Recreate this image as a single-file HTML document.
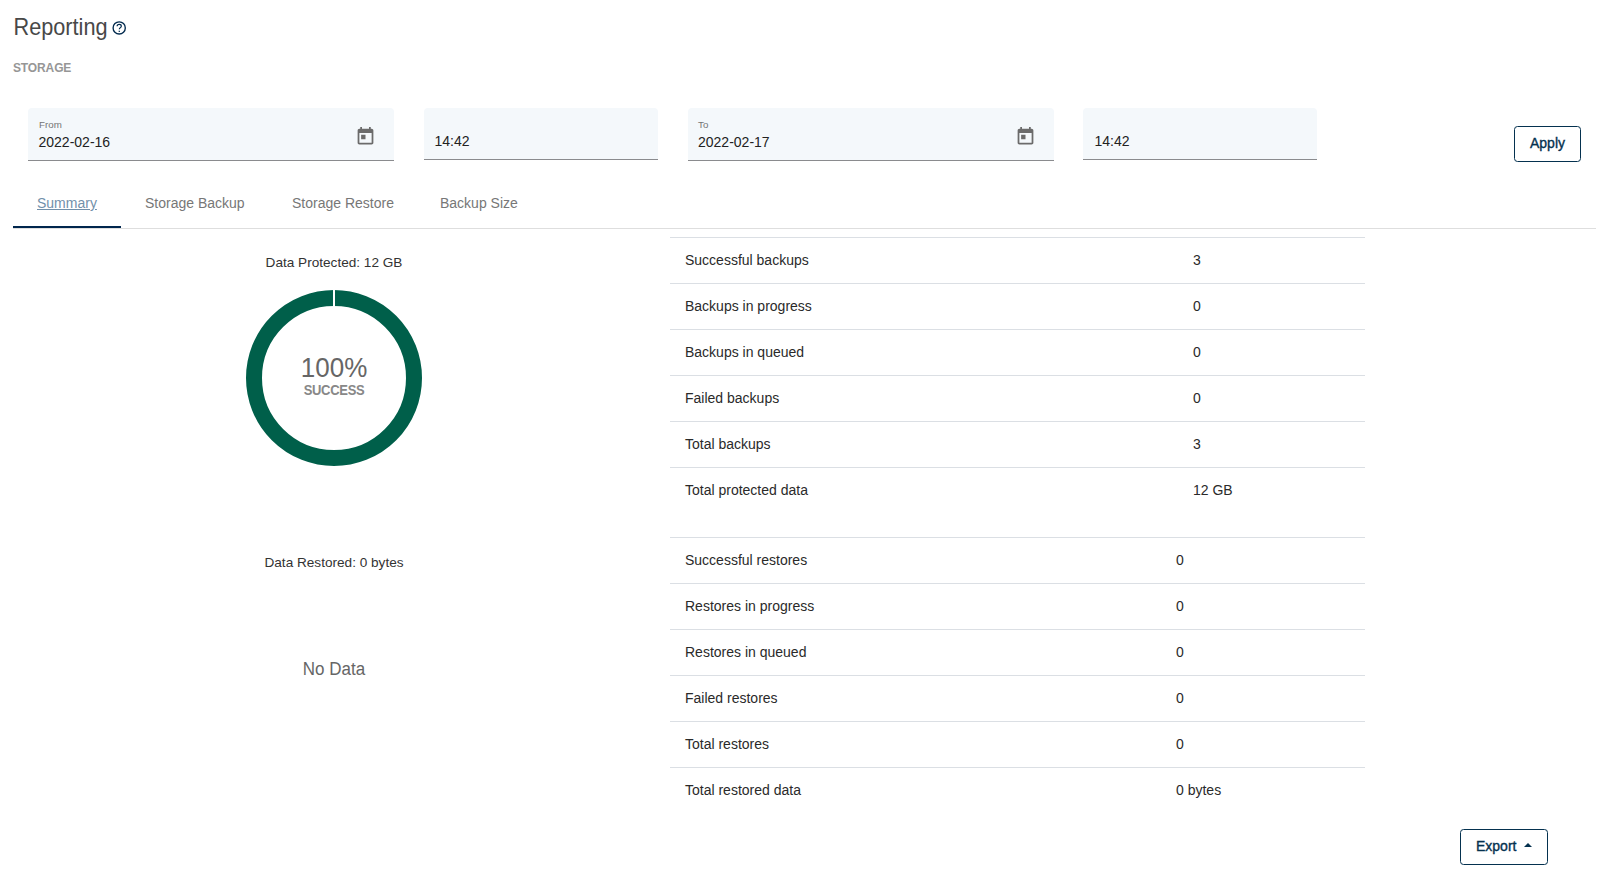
<!DOCTYPE html>
<html>
<head>
<meta charset="utf-8">
<style>
html,body{margin:0;padding:0;background:#fff;width:1610px;height:875px;overflow:hidden;}
body{position:relative;font-family:"Liberation Sans",sans-serif;color:#333;}
.a{position:absolute;white-space:nowrap;}
.t{position:absolute;white-space:nowrap;line-height:1;}
.box{position:absolute;background:#f4f8fb;border-radius:4px 4px 0 0;box-sizing:border-box;border-bottom:1px solid #8a8b8e;}
.lbl{font-size:9.75px;color:#757575;}
.val{font-size:14px;color:#222;}
.tab{font-size:14px;color:#777;}
.hl{position:absolute;height:1px;background:#dbdfe4;}
.row{font-size:14px;color:#2a2a2a;}
.btn{position:absolute;box-sizing:border-box;border:1.5px solid #04314f;border-radius:3.5px;background:#fff;}
</style>
</head>
<body>
<!-- Title -->
<div class="t" style="left:13.5px;top:16.6px;font-size:21.7px;color:#484848;transform:scaleY(1.065);transform-origin:0 18.37px;">Reporting</div>
<svg class="a" style="left:111px;top:20px" width="16" height="16" viewBox="0 0 16 16"><circle cx="8.2" cy="7.9" r="6.1" fill="none" stroke="#022a4e" stroke-width="1.35"/><path d="M6.1 6.3C6.1 5.1 7 4.4 8.2 4.4S10.3 5.1 10.3 6.2C10.3 7.6 8.3 7.7 8.3 9.3" fill="none" stroke="#022a4e" stroke-width="1.2"/><rect x="7.65" y="10.7" width="1.3" height="1.2" fill="#022a4e"/></svg>
<div class="t" style="left:13px;top:61.8px;font-size:12px;font-weight:bold;color:#969696;letter-spacing:-0.13px;">STORAGE</div>

<!-- Inputs -->
<div class="box" style="left:28px;top:108px;width:366px;height:53px;"></div>
<div class="t lbl" style="left:39px;top:119.8px;">From</div>
<div class="t val" style="left:38.5px;top:135.2px;">2022-02-16</div>
<svg class="a" style="left:355px;top:126px" width="21" height="21" viewBox="0 0 24 24"><path fill="#6b6b6b" d="M19 3h-1V1h-2v2H8V1H6v2H5c-1.11 0-1.99.9-1.99 2L3 19c0 1.1.89 2 2 2h14c1.1 0 2-.9 2-2V5c0-1.1-.9-2-2-2zm0 16H5V8h14v11zM7 10h5v5H7z"/></svg>

<div class="box" style="left:424px;top:108px;width:234px;height:52px;"></div>
<div class="t val" style="left:434.5px;top:133.9px;">14:42</div>

<div class="box" style="left:688px;top:108px;width:366px;height:53px;"></div>
<div class="t lbl" style="left:698px;top:119.8px;">To</div>
<div class="t val" style="left:698px;top:135.2px;">2022-02-17</div>
<svg class="a" style="left:1015px;top:126px" width="21" height="21" viewBox="0 0 24 24"><path fill="#6b6b6b" d="M19 3h-1V1h-2v2H8V1H6v2H5c-1.11 0-1.99.9-1.99 2L3 19c0 1.1.89 2 2 2h14c1.1 0 2-.9 2-2V5c0-1.1-.9-2-2-2zm0 16H5V8h14v11zM7 10h5v5H7z"/></svg>

<div class="box" style="left:1083px;top:108px;width:234px;height:52px;"></div>
<div class="t val" style="left:1094.5px;top:133.9px;">14:42</div>

<div class="btn" style="left:1514px;top:126px;width:67px;height:36px;"></div>
<div class="t" style="left:1530px;top:136.3px;font-size:14px;color:#04314f;-webkit-text-stroke:0.35px #04314f;">Apply</div>

<!-- Tabs -->
<div class="a" style="left:13px;top:228px;width:1583px;height:1px;background:#dedede;"></div>
<div class="a" style="left:13px;top:226px;width:108px;height:2px;background:#00264d;"></div>
<div class="t tab" style="left:37px;top:196px;color:#7290aa;text-decoration:underline;">Summary</div>
<div class="t tab" style="left:145px;top:196px;">Storage Backup</div>
<div class="t tab" style="left:292px;top:196px;">Storage Restore</div>
<div class="t tab" style="left:440px;top:196px;">Backup Size</div>

<!-- Charts -->
<div class="t" style="left:234px;width:200px;text-align:center;top:255.6px;font-size:13.6px;color:#333;">Data Protected: 12 GB</div>
<svg class="a" style="left:244px;top:288px" width="180" height="180" viewBox="0 0 180 180">
<circle cx="90" cy="90" r="80" fill="none" stroke="#005f4a" stroke-width="16"/>
<rect x="89" y="0" width="2" height="20" fill="#fff"/>
</svg>
<div class="t" style="left:234px;width:200px;text-align:center;top:354.8px;font-size:26px;color:#666;transform:scaleY(1.085);transform-origin:50% 22px;">100%</div>
<div class="t" style="left:234px;width:200px;text-align:center;top:384px;font-size:13px;font-weight:bold;color:#888;letter-spacing:-0.3px;transform:scaleY(1.11);transform-origin:50% 11px;">SUCCESS</div>

<div class="t" style="left:234px;width:200px;text-align:center;top:555.7px;font-size:13.6px;color:#333;">Data Restored: 0 bytes</div>
<div class="t" style="left:234px;width:200px;text-align:center;top:661.2px;font-size:17px;color:#666;transform:scaleY(1.05);transform-origin:50% 14.4px;">No Data</div>

<!-- Tables -->
<div id="tables"></div>
<div class="hl" style="left:670px;top:237px;width:695px;"></div>
<div class="hl" style="left:670px;top:283px;width:695px;"></div>
<div class="hl" style="left:670px;top:329px;width:695px;"></div>
<div class="hl" style="left:670px;top:375px;width:695px;"></div>
<div class="hl" style="left:670px;top:421px;width:695px;"></div>
<div class="hl" style="left:670px;top:467px;width:695px;"></div>
<div class="t row" style="left:685px;top:253px;">Successful backups</div><div class="t row" style="left:1193px;top:253px;">3</div>
<div class="t row" style="left:685px;top:299px;">Backups in progress</div><div class="t row" style="left:1193px;top:299px;">0</div>
<div class="t row" style="left:685px;top:345px;">Backups in queued</div><div class="t row" style="left:1193px;top:345px;">0</div>
<div class="t row" style="left:685px;top:391px;">Failed backups</div><div class="t row" style="left:1193px;top:391px;">0</div>
<div class="t row" style="left:685px;top:437px;">Total backups</div><div class="t row" style="left:1193px;top:437px;">3</div>
<div class="t row" style="left:685px;top:483px;">Total protected data</div><div class="t row" style="left:1193px;top:483px;">12 GB</div>

<div class="hl" style="left:670px;top:537px;width:695px;"></div>
<div class="hl" style="left:670px;top:583px;width:695px;"></div>
<div class="hl" style="left:670px;top:629px;width:695px;"></div>
<div class="hl" style="left:670px;top:675px;width:695px;"></div>
<div class="hl" style="left:670px;top:721px;width:695px;"></div>
<div class="hl" style="left:670px;top:767px;width:695px;"></div>
<div class="t row" style="left:685px;top:553px;">Successful restores</div><div class="t row" style="left:1176px;top:553px;">0</div>
<div class="t row" style="left:685px;top:599px;">Restores in progress</div><div class="t row" style="left:1176px;top:599px;">0</div>
<div class="t row" style="left:685px;top:645px;">Restores in queued</div><div class="t row" style="left:1176px;top:645px;">0</div>
<div class="t row" style="left:685px;top:691px;">Failed restores</div><div class="t row" style="left:1176px;top:691px;">0</div>
<div class="t row" style="left:685px;top:737px;">Total restores</div><div class="t row" style="left:1176px;top:737px;">0</div>
<div class="t row" style="left:685px;top:783px;">Total restored data</div><div class="t row" style="left:1176px;top:783px;">0 bytes</div>

<!-- Export -->
<div class="btn" style="left:1460px;top:829px;width:88px;height:36px;"></div>
<div class="t" style="left:1476px;top:839px;font-size:14px;color:#04314f;-webkit-text-stroke:0.35px #04314f;">Export</div>
<svg class="a" style="left:1524px;top:843px" width="8" height="4" viewBox="0 0 8 4"><path d="M0 4L4 0L8 4z" fill="#04314f"/></svg>
</body>
</html>
